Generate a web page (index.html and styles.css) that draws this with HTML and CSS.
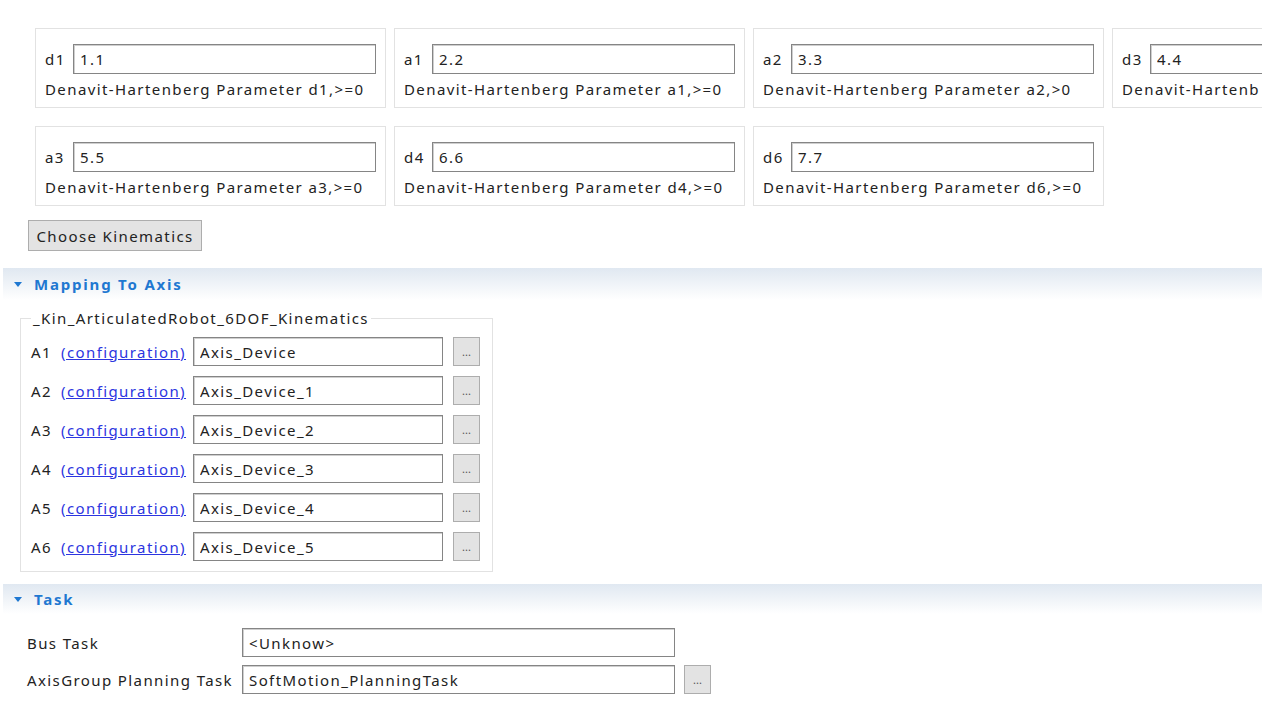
FILE: index.html
```html
<!DOCTYPE html>
<html lang="en">
<head>
    <meta charset="UTF-8">
    <title>Kinematics</title>
    <link rel="stylesheet" href="styles.css">
</head>
<body>
    <div class="page">
        <!-- DH parameters -->
        <div class="params">
            <div class="param-row">
                <div class="param">
                    <div class="param-line"><span class="param-name">d1</span><input class="field" type="text" value="1.1"></div>
                    <div class="param-desc">Denavit-Hartenberg Parameter d1,&gt;=0</div>
                </div>
                <div class="param">
                    <div class="param-line"><span class="param-name">a1</span><input class="field" type="text" value="2.2"></div>
                    <div class="param-desc">Denavit-Hartenberg Parameter a1,&gt;=0</div>
                </div>
                <div class="param">
                    <div class="param-line"><span class="param-name">a2</span><input class="field" type="text" value="3.3"></div>
                    <div class="param-desc">Denavit-Hartenberg Parameter a2,&gt;0</div>
                </div>
                <div class="param">
                    <div class="param-line"><span class="param-name">d3</span><input class="field" type="text" value="4.4"></div>
                    <div class="param-desc">Denavit-Hartenb</div>
                </div>
            </div>
            <div class="param-row">
                <div class="param">
                    <div class="param-line"><span class="param-name">a3</span><input class="field" type="text" value="5.5"></div>
                    <div class="param-desc">Denavit-Hartenberg Parameter a3,&gt;=0</div>
                </div>
                <div class="param">
                    <div class="param-line"><span class="param-name">d4</span><input class="field" type="text" value="6.6"></div>
                    <div class="param-desc">Denavit-Hartenberg Parameter d4,&gt;=0</div>
                </div>
                <div class="param">
                    <div class="param-line"><span class="param-name">d6</span><input class="field" type="text" value="7.7"></div>
                    <div class="param-desc">Denavit-Hartenberg Parameter d6,&gt;=0</div>
                </div>
            </div>
        </div>

        <button class="button choose">Choose Kinematics</button>

        <!-- Mapping To Axis -->
        <div class="section-head"><span class="arrow"></span>Mapping To Axis</div>
        <fieldset class="axis-group">
            <legend>_Kin_ArticulatedRobot_6DOF_Kinematics</legend>
            <div class="axis-row"><span class="axis-name">A1</span><a href="#" class="config">(configuration)</a><input class="field axis-field" type="text" value="Axis_Device"><button class="button dots">...</button></div>
            <div class="axis-row"><span class="axis-name">A2</span><a href="#" class="config">(configuration)</a><input class="field axis-field" type="text" value="Axis_Device_1"><button class="button dots">...</button></div>
            <div class="axis-row"><span class="axis-name">A3</span><a href="#" class="config">(configuration)</a><input class="field axis-field" type="text" value="Axis_Device_2"><button class="button dots">...</button></div>
            <div class="axis-row"><span class="axis-name">A4</span><a href="#" class="config">(configuration)</a><input class="field axis-field" type="text" value="Axis_Device_3"><button class="button dots">...</button></div>
            <div class="axis-row"><span class="axis-name">A5</span><a href="#" class="config">(configuration)</a><input class="field axis-field" type="text" value="Axis_Device_4"><button class="button dots">...</button></div>
            <div class="axis-row"><span class="axis-name">A6</span><a href="#" class="config">(configuration)</a><input class="field axis-field" type="text" value="Axis_Device_5"><button class="button dots">...</button></div>
        </fieldset>

        <!-- Task -->
        <div class="section-head task-head"><span class="arrow"></span>Task</div>
        <div class="tasks">
            <div class="task-row"><span class="task-name">Bus Task</span><input class="field task-field" type="text" value="&lt;Unknow&gt;"></div>
            <div class="task-row"><span class="task-name">AxisGroup Planning Task</span><input class="field task-field" type="text" value="SoftMotion_PlanningTask"><button class="button dots">...</button></div>
        </div>
    </div>
</body>
</html>
```

FILE: styles.css
```css
body {
    margin: 0;
    background: #ffffff;
    font-family: "Noto Sans", "Open Sans", sans-serif;
    font-size: 15px;
    letter-spacing: 1.4px;
    color: #222222;
}
.page {
    width: 1262px;
    overflow: hidden;
    padding-top: 28px;
}

/* parameter boxes */
.params {
    display: flex;
    flex-direction: column;
    gap: 18px;
    padding-left: 35px;
}
.param-row {
    display: flex;
    gap: 8px;
}
.param {
    flex: none;
    width: 351px;
    height: 80px;
    box-sizing: border-box;
    border: 1px solid #e2e2e2;
    padding: 15px 9px 0 9px;
}
.param-line {
    display: flex;
    align-items: center;
    gap: 5px;
}
.param-name {
    width: 23px;
}
.param-desc {
    margin-top: 5px;
    white-space: nowrap;
}
.field {
    font: inherit;
    letter-spacing: inherit;
    color: #222;
    height: 29px;
    box-sizing: border-box;
    border: 1px solid #858585;
    box-shadow: inset 1px 1px 0 #cfcfcf;
    padding: 0 6px;
    background: #fff;
}
.param .field {
    flex: 1;
    min-width: 0;
    height: 30px;
}

/* buttons */
.button {
    font: inherit;
    letter-spacing: inherit;
    color: #222;
    background: #e3e3e3;
    border: 1px solid #adadad;
    padding: 0;
    cursor: pointer;
}
.choose {
    display: block;
    margin: 14px 0 0 28px;
    width: 174px;
    height: 31px;
}
.dots {
    width: 27px;
    height: 29px;
    font-size: 11px;
    letter-spacing: 0;
    color: #555;
    line-height: 1;
}

/* collapsible section bar */
.section-head {
    margin: 17px 0 0 3px;
    height: 32px;
    display: flex;
    align-items: center;
    padding-left: 11px;
    background: linear-gradient(#e0e8f1, #ffffff);
    color: #1f78d1;
    font-weight: bold;
    letter-spacing: 1.8px;
}
.arrow {
    width: 0;
    height: 0;
    border-left: 4px solid transparent;
    border-right: 4px solid transparent;
    border-top: 5px solid #1f78d1;
    margin-right: 12px;
}

/* axis mapping */
.axis-group {
    margin: 8px 0 0 20px;
    width: 473px;
    box-sizing: border-box;
    border: 1px solid #e2e2e2;
    padding: 9px 10px 10px 10px;
    display: flex;
    flex-direction: column;
    gap: 10px;
}
.axis-group legend {
    padding: 0 2px;
    margin-left: 0;
}
.axis-row {
    display: flex;
    align-items: center;
    height: 29px;
}
.axis-name {
    width: 30px;
}
.config {
    color: #2c35e0;
    width: 132px;
    white-space: nowrap;
}
.axis-field {
    width: 250px;
    margin-right: 10px;
}

/* task section */
.task-head {
    margin-top: 12px;
    height: 30px;
}
.tasks {
    padding: 14px 0 0 27px;
    display: flex;
    flex-direction: column;
    gap: 8px;
}
.task-row {
    display: flex;
    align-items: center;
}
.task-name {
    width: 215px;
    white-space: nowrap;
}
.task-field {
    width: 433px;
    margin-right: 9px;
}
```
